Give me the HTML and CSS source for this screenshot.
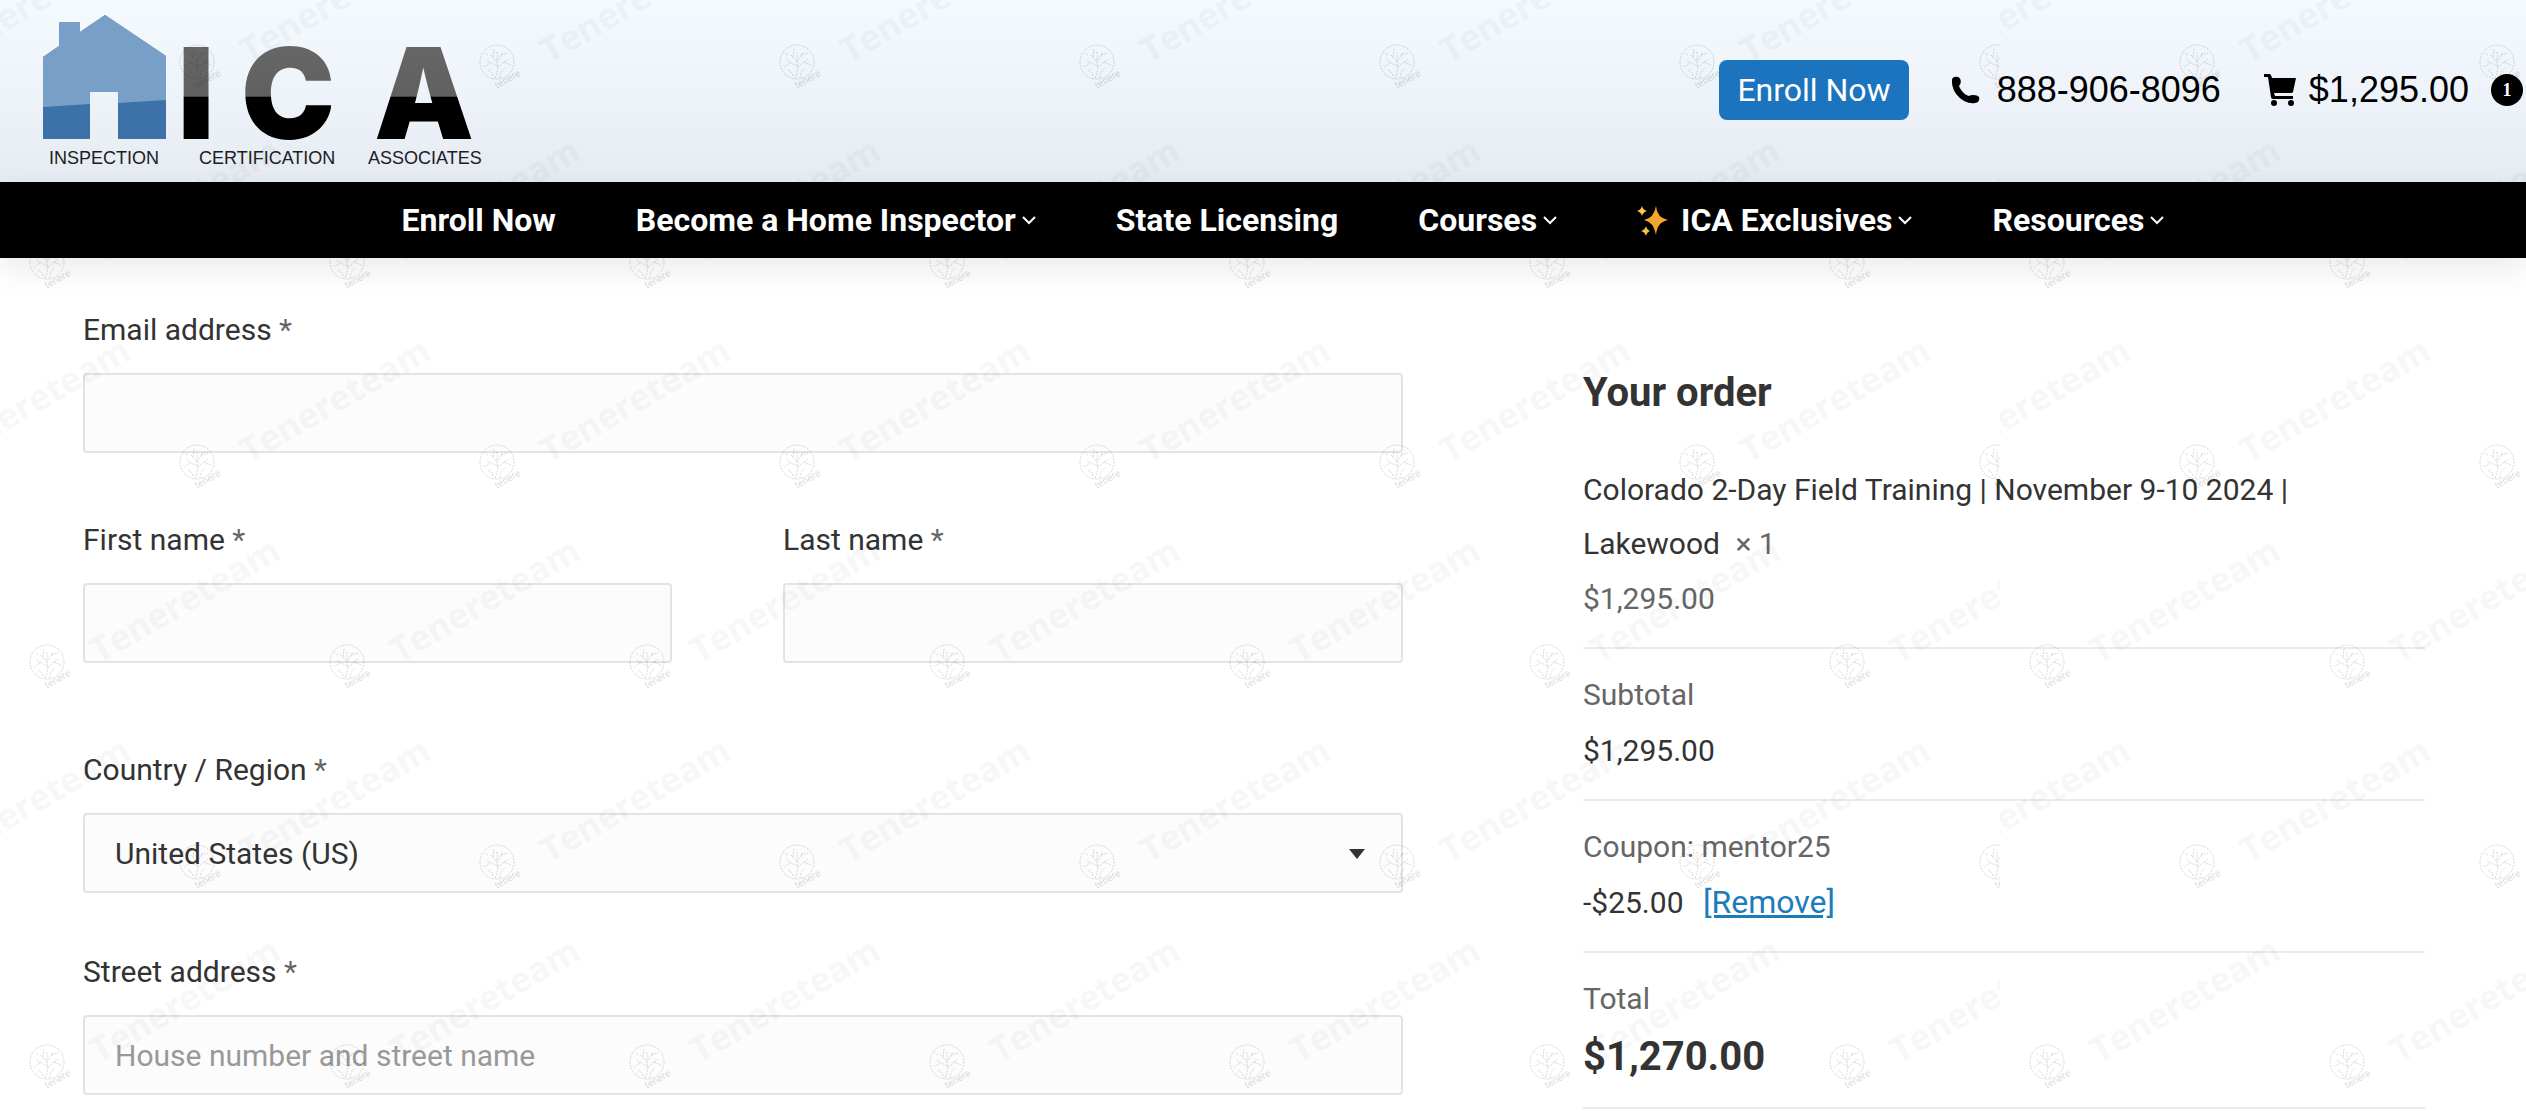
FILE: index.html
```html
<!DOCTYPE html>
<html lang="en">
<head>
  <meta charset="UTF-8">
  <meta name="viewport" content="width=device-width, initial-scale=1.0">
  <title>Checkout - Inspection Certification Associates</title>
  <link rel="stylesheet" href="styles.css">
</head>
<body>
  <header class="top-bar">
    <a href="#" class="logo" aria-label="Inspection Certification Associates">
      <svg width="460" height="160" viewBox="40 12 460 160">
        <defs>
          <linearGradient id="shine" gradientUnits="userSpaceOnUse" x1="0" y1="48" x2="0" y2="139">
            <stop offset="0" stop-color="#666"/>
            <stop offset="0.53" stop-color="#606060"/>
            <stop offset="0.54" stop-color="#000"/>
          </linearGradient>
        </defs>
        <path fill="#3c72a8" d="M43 57L59 46V22H80V32L105 15L166 56V139H118V92H90V139H43Z"/>
        <path fill="#789fc7" d="M43 57L59 46V22H80V32L105 15L166 56V100L118 103V92H90V104L43 107Z"/>
        <g class="logo-name">
          <text x="196" y="139">I</text>
          <text x="288" y="139">C</text>
          <text x="424" y="139">A</text>
        </g>
        <g class="logo-caption">
          <text x="49" y="164">INSPECTION</text>
          <text x="199" y="164">CERTIFICATION</text>
          <text x="368" y="164">ASSOCIATES</text>
        </g>
      </svg>
    </a>
    <div class="top-links">
      <button type="button" class="enroll">Enroll Now</button>
      <a href="#" class="phone">
        <svg width="30" height="30" viewBox="0 0 30 30"><path d="M1 5C1 2 4 1 7 2C10 3 11 8 8 11C10 16 14 20 18 21C21 19 27 20 28 22C29 25 27 28 24 28C13 30 0 18 1 5Z"/></svg>
        888-906-8096
      </a>
      <a href="#" class="cart">
        <svg width="34" height="34" viewBox="0 0 34 34"><path d="M1 1H6C8 1 8 2 9 5H33L30 19Q30 20 28 20H11L12 23H30V26H10Q8 26 8 24L5 4H1Z"/><circle cx="11" cy="30" r="3"/><circle cx="28" cy="30" r="3"/></svg>
        $1,295.00
        <span class="badge">1</span>
      </a>
    </div>
  </header>

  <nav class="menu">
    <a href="#">Enroll Now</a>
    <a href="#">Become a Home Inspector<svg class="chevron" viewBox="0 0 14 9"><path d="M1 1L7 7L13 1"/></svg></a>
    <a href="#">State Licensing</a>
    <a href="#">Courses<svg class="chevron" viewBox="0 0 14 9"><path d="M1 1L7 7L13 1"/></svg></a>
    <a href="#"><svg class="sparkles" width="32" height="32" viewBox="0 0 32 32"><path fill="#f9a92f" d="M19 2Q20 14 31 16Q20 18 19 31Q17 18 7 16Q17 14 19 2Z"/><path fill="#fdc94c" d="M5 2Q6 6 10 7Q6 8 5 12Q4 8 0 7Q4 6 5 2ZM9 22Q10 26 13 27Q10 28 9 32Q8 28 4 27Q8 26 9 22Z"/></svg>ICA Exclusives<svg class="chevron" viewBox="0 0 14 9"><path d="M1 1L7 7L13 1"/></svg></a>
    <a href="#">Resources<svg class="chevron" viewBox="0 0 14 9"><path d="M1 1L7 7L13 1"/></svg></a>
  </nav>

  <main class="checkout">
    <form class="billing">
      <div class="field">
        <label for="email">Email address <span class="required">*</span></label>
        <input type="email" id="email" required>
      </div>
      <div class="name-row">
        <div class="field">
          <label for="firstName">First name <span class="required">*</span></label>
          <input type="text" id="firstName" required>
        </div>
        <div class="field">
          <label for="lastName">Last name <span class="required">*</span></label>
          <input type="text" id="lastName" required>
        </div>
      </div>
      <div class="field">
        <label for="country">Country / Region <span class="required">*</span></label>
        <div class="select-wrap">
          <select id="country">
            <option>United States (US)</option>
          </select>
        </div>
      </div>
      <div class="field">
        <label for="street">Street address <span class="required">*</span></label>
        <input type="text" id="street" placeholder="House number and street name" required>
      </div>
    </form>

    <aside class="order">
      <h2>Your order</h2>
      <table>
        <tbody>
          <tr class="product">
            <th scope="row">Colorado 2-Day Field Training | November 9-10 2024 | Lakewood <span class="quantity">× 1</span></th>
            <td>$1,295.00</td>
          </tr>
          <tr>
            <th scope="row">Subtotal</th>
            <td>$1,295.00</td>
          </tr>
          <tr>
            <th scope="row">Coupon: mentor25</th>
            <td>-$25.00 <a href="#" class="remove">[Remove]</a></td>
          </tr>
          <tr class="total">
            <th scope="row">Total</th>
            <td>$1,270.00</td>
          </tr>
        </tbody>
      </table>
    </aside>
  </main>

  <!-- watermark: 300x400 staggered marks on 2000px sheets -->
  <svg class="watermark" aria-hidden="true">
    <defs>
      <g id="mark">
        <g class="emblem">
          <circle r="17"/>
          <path d="M-2 16Q2 8 0 0L-7 -8M0 0L6 -10M0 4L-11 -2M1 5L11 -3M-4 -5L-3 -13M4 -7L11 -9M-7 1L-13 5M7 0L14 3M3 16Q3 10 8 6M-4 14Q-5 9 -10 8M0 -2V-11M-9 -7L-12 -9"/>
        </g>
        <text class="emblem-name" x="0" y="27" transform="rotate(-30 0 27)">tenere</text>
        <text class="mark-name" x="52" y="2" transform="rotate(-30 52 2)">Tenereteam</text>
      </g>
      <pattern id="marks" width="300" height="400" patternUnits="userSpaceOnUse">
        <use href="#mark" x="-103" y="62"/>
        <use href="#mark" x="197" y="62"/>
        <use href="#mark" x="47" y="262"/>
        <use href="#mark" x="-103" y="462"/>
        <use href="#mark" x="197" y="462"/>
      </pattern>
      <pattern id="sheet" width="2000" height="2000" patternUnits="userSpaceOnUse">
        <rect width="2000" height="2000" fill="url(#marks)"/>
      </pattern>
    </defs>
    <rect width="100%" height="100%" fill="url(#sheet)"/>
  </svg>
</body>
</html>
```
FILE: styles.css
```css
* {
  box-sizing: border-box;
}
body {
  margin: 0;
  font-family: Roboto, sans-serif;
  font-size: 30px;
  color: #333;
  background-color: #fff;
  overflow-x: hidden;
}
a {
  color: inherit;
  text-decoration: none;
}

/* header */
.top-bar {
  display: flex;
  justify-content: space-between;
  align-items: flex-start;
  height: 182px;
  padding: 12px 3px 0 40px;
  background: linear-gradient(#f4fafd, #edf2f9 60%, #e5ebf0);
}
.logo svg {
  display: block;
}
.logo-name {
  font-family: Inter, sans-serif;
  font-size: 126px;
  font-weight: 900;
  text-anchor: middle;
  fill: url(#shine);
}
.logo-caption {
  font-family: "Liberation Sans", Arial, sans-serif;
  font-size: 18px;
  fill: #1c2024;
}
.top-links {
  display: flex;
  align-items: center;
  gap: 42px;
  padding-top: 48px;
  color: #000;
  font-family: "Liberation Sans", Arial, sans-serif;
  font-size: 36px;
}
.enroll {
  height: 60px;
  padding: 0 18px;
  border: none;
  border-radius: 8px;
  background-color: #1c73be;
  color: #fff;
  font-family: Roboto, sans-serif;
  font-size: 32px;
  cursor: pointer;
}
.phone,
.cart {
  display: flex;
  align-items: center;
}
.phone svg {
  margin-right: 16px;
}
.cart svg {
  margin-right: 12px;
}
.badge {
  width: 32px;
  height: 32px;
  margin-left: 22px;
  border-radius: 50%;
  background-color: #000;
  color: #fff;
  font-family: "Liberation Serif", serif;
  font-size: 18px;
  font-weight: bold;
  line-height: 32px;
  text-align: center;
}

/* menu */
.menu {
  display: flex;
  justify-content: center;
  align-items: center;
  gap: 80px;
  height: 76px;
  padding-left: 40px;
  background-color: #000;
  box-shadow: 0 12px 30px rgba(0, 0, 0, 0.08);
  color: #fff;
  font-size: 32px;
  font-weight: bold;
}
.menu a {
  display: flex;
  align-items: center;
}
.chevron {
  width: 14px;
  height: 9px;
  margin-left: 6px;
  fill: none;
  stroke: #fff;
  stroke-width: 2;
}
.sparkles {
  margin-right: 12px;
}

/* checkout */
.checkout {
  display: grid;
  grid-template-columns: 1320fr 842fr;
  gap: 180px;
  padding: 0 101px 20px 83px;
}
.billing {
  padding-top: 48px;
}
.field label {
  display: block;
  margin-bottom: 19px;
  line-height: 48px;
}
.required {
  color: #666;
}
.name-row {
  display: grid;
  grid-template-columns: 589fr 620fr;
  gap: 111px;
  margin: 63px 0 83px;
}
.select-wrap {
  position: relative;
  margin-bottom: 55px;
}
.select-wrap::after {
  content: "";
  position: absolute;
  right: 38px;
  top: 36px;
  border: 8px solid transparent;
  border-top: 10px solid #333;
  border-bottom: none;
  pointer-events: none;
}
input,
select {
  display: block;
  width: 100%;
  height: 80px;
  padding: 0 30px;
  border: 2px solid #e3e3e3;
  border-radius: 4px;
  background-color: #fcfcfc;
  color: #333;
  font-family: inherit;
  font-size: 30px;
  appearance: none;
}
input::placeholder {
  color: #999;
}

/* order */
.order {
  padding-top: 111px;
}
.order h2 {
  margin: 0 0 46px;
  font-size: 40px;
  line-height: 48px;
}
.order table,
.order tbody,
.order tr,
.order th,
.order td {
  display: block;
  padding: 0;
}
.order tr {
  padding: 18px 0 20px;
  border-bottom: 2px solid #ebebeb;
}
.order th {
  color: #666;
  font-weight: normal;
  line-height: 56px;
  text-align: left;
}
.order td {
  line-height: 56px;
}
.order .product {
  padding-top: 0;
}
.order .product th {
  max-width: 760px;
  color: #333;
  line-height: 54px;
}
.order .product td,
.quantity {
  color: #666;
}
.quantity {
  margin-left: 8px;
}
.remove {
  margin-left: 12px;
  color: #1b7bbb;
  font-size: 32px;
  line-height: 48px;
  text-decoration: underline;
}
.order .total td {
  font-size: 40px;
  font-weight: bold;
  line-height: 60px;
}

/* watermark */
.watermark {
  position: absolute;
  top: 0;
  left: 0;
  width: 100%;
  height: 100%;
  pointer-events: none;
}
.emblem {
  fill: none;
  stroke: #000;
  stroke-opacity: 0.14;
  stroke-dasharray: 2 1;
}
.emblem-name {
  font-size: 10px;
  fill-opacity: 0.14;
}
.mark-name {
  font-family: "Open Sans", sans-serif;
  font-size: 35px;
  font-weight: bold;
  fill-opacity: 0.03;
}
```
